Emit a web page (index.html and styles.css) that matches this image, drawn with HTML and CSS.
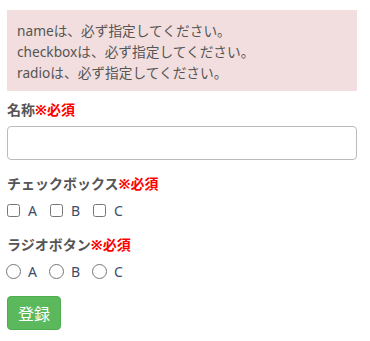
FILE: index.html
```html
<!DOCTYPE html>
<html lang="ja">
<head>
    <meta charset="UTF-8">
    <title>フォーム</title>
    <link rel="stylesheet" href="styles.css">
</head>
<body>
<div class="container">
    <div class="alert">
        <div>nameは、必ず指定してください。</div>
        <div>checkboxは、必ず指定してください。</div>
        <div>radioは、必ず指定してください。</div>
    </div>

    <div class="form-group">
        <label class="title">名称<span class="required">※必須</span></label>
        <input type="text" class="form-control">
    </div>

    <div class="form-group">
        <label class="title">チェックボックス<span class="required">※必須</span></label>
        <div class="choices">
            <label class="choice"><input type="checkbox">A</label>
            <label class="choice"><input type="checkbox">B</label>
            <label class="choice"><input type="checkbox">C</label>
        </div>
    </div>

    <div class="form-group">
        <label class="title">ラジオボタン<span class="required">※必須</span></label>
        <div class="choices">
            <label class="choice"><input type="radio" name="r">A</label>
            <label class="choice"><input type="radio" name="r">B</label>
            <label class="choice"><input type="radio" name="r">C</label>
        </div>
    </div>

    <button class="btn">登録</button>
</div>
</body>
</html>
```

FILE: styles.css
```css
body {
    margin: 0;
    background: #fff;
    font-family: "Noto Sans", "Noto Sans CJK JP", sans-serif;
    color: #555;
    font-size: 13px;
}
.container {
    width: 350px;
    padding: 10px 7px;
}
.alert {
    background-color: #f2dede;
    padding: 10px 10px 8px;
    line-height: 21px;
    font-size: 13.7px;
    color: #555;
    margin-bottom: 9px;
}
.form-group {
    margin-bottom: 14px;
}
.title {
    display: block;
    font-weight: bold;
    font-size: 14px;
    line-height: 20px;
    margin-bottom: 6px;
    color: #555;
}
.required {
    color: #f00;
}
.form-control {
    display: block;
    box-sizing: border-box;
    width: 350px;
    height: 34px;
    border: 1px solid #bbb;
    border-radius: 4px;
    margin: 0;
}
.choices {
    display: flex;
    height: 21px;
}
.choice {
    display: flex;
    align-items: center;
    width: 43px;
    font-size: 14px;
    color: #3d4d6a;
}
.choice input {
    margin: 0 8px 0 0;
    width: 13px;
    height: 13px;
}
.choice input[type=radio] {
    margin: 0 7px 0 -1px;
    width: 15px;
    height: 15px;
}
.btn {
    display: block;
    background-color: #5cb85c;
    border: 1px solid #4cae4c;
    border-radius: 4px;
    color: #fff;
    font-family: "Noto Sans", "Noto Sans CJK JP", sans-serif;
    font-size: 16px;
    width: 54px;
    height: 34px;
    padding: 0;
}
```
